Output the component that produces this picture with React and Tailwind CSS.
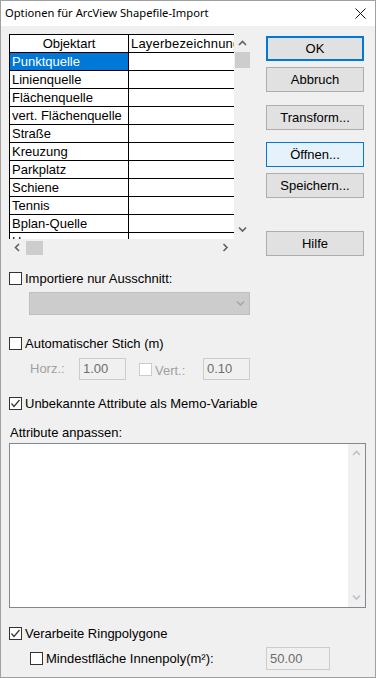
import React from 'react';

const rows = [
    'Punktquelle',
    'Linienquelle',
    'Flächenquelle',
    'vert. Flächenquelle',
    'Straße',
    'Kreuzung',
    'Parkplatz',
    'Schiene',
    'Tennis',
    'Bplan-Quelle',
    'Haus',
];

function Chevron({ dir, color = '#606060' }) {
    const pts = {
        up: '1,5 4.5,1.5 8,5',
        down: '1,1.5 4.5,5 8,1.5',
        left: '5,1 1.5,4.5 5,8',
        right: '1.5,1 5,4.5 1.5,8',
    }[dir];
    const horiz = dir === 'left' || dir === 'right';
    return (
        <svg width={horiz ? 7 : 9} height={horiz ? 9 : 7} viewBox={horiz ? '0 0 7 9' : '0 0 9 7'}>
            <polyline points={pts} fill="none" stroke={color} strokeWidth="1.6" />
        </svg>
    );
}

function CheckBox({ checked, disabled }) {
    return (
        <div className={`w-[13px] h-[13px] shrink-0 border ${disabled ? 'border-[#cccccc]' : 'border-[#333333]'} bg-white flex items-center justify-center`}>
            {checked && (
                <svg width="11" height="11" viewBox="0 0 11 11">
                    <polyline points="1.5,5.5 4,8.5 9.5,2" fill="none" stroke="#333333" strokeWidth="1.2" />
                </svg>
            )}
        </div>
    );
}

function Button({ children, variant, className = '' }) {
    let look = 'border border-[#adadad] bg-[#e1e1e1]';
    if (variant === 'default') look = 'border-2 border-[#0078d7] bg-[#e1e1e1]';
    if (variant === 'hover') look = 'border border-[#0078d7] bg-[#e5f1fb]';
    return (
        <div className={`${look} ${className} h-[25px] w-[98px] flex items-center justify-center text-[13px] text-black`}>
            {children}
        </div>
    );
}

function DisabledInput({ value, className = '' }) {
    return (
        <div className={`${className} h-[22px] border border-[#cccccc] bg-[#f0f0f0] text-[13px] text-[#6d6d6d] pl-[3px] flex items-center`}>
            {value}
        </div>
    );
}

export default function App() {
    return (
        <div className="w-[376px] h-[678px] border border-[#a0a0a0] bg-[#f0f0f0] flex flex-col font-['Liberation_Sans',Arial,sans-serif] text-[13px] text-black overflow-hidden">
            {/* title bar */}
            <div className="h-[25px] bg-white flex items-center justify-between pl-[4px] pr-[9px] shrink-0">
                <span className="font-['Noto_Sans',sans-serif] text-[11.2px] text-black">Optionen für ArcView Shapefile-Import</span>
                <svg width="11" height="11" viewBox="0 0 11 11">
                    <path d="M0.5 0.5 L10.5 10.5 M10.5 0.5 L0.5 10.5" stroke="#111" strokeWidth="1" />
                </svg>
            </div>

            <div className="pl-[8px] pt-[8px] flex flex-col">
                {/* list + buttons */}
                <div className="flex h-[223px]">
                    <div className="w-[242px] h-[222px] flex flex-col">
                        <div className="flex h-[205px]">
                            <div className="w-[225px] h-[205px] bg-white border-l border-t border-black overflow-hidden">
                                <div className="flex h-[18px] border-b border-black">
                                    <div className="w-[119px] shrink-0 border-r border-black flex items-center justify-center">Objektart</div>
                                    <div className="pl-[2px] flex items-center whitespace-nowrap tracking-[0.2px]">Layerbezeichnung</div>
                                </div>
                                {rows.map((r, i) => (
                                    <div key={r} className="flex h-[18px] border-b border-black">
                                        <div className={`w-[119px] shrink-0 border-r border-black flex items-center pl-[2px] whitespace-nowrap ${i === 0 ? 'bg-[#0078d7] text-white' : ''}`}>
                                            {r}
                                        </div>
                                        <div className="flex-1" />
                                    </div>
                                ))}
                            </div>
                            <div className="w-[17px] h-[205px] bg-[#f0f0f0] flex flex-col items-center">
                                <div className="h-[17px] flex items-center justify-center mt-[1px]"><Chevron dir="up" /></div>
                                <div className="w-[15px] h-[16px] bg-[#cdcdcd]" />
                                <div className="flex-1" />
                                <div className="h-[17px] flex items-center justify-center mb-[1px]"><Chevron dir="down" /></div>
                            </div>
                        </div>
                        <div className="flex h-[17px]">
                            <div className="w-[225px] bg-[#f0f0f0] flex items-center">
                                <div className="w-[17px] flex items-center justify-center"><Chevron dir="left" /></div>
                                <div className="w-[17px] h-[14px] bg-[#cdcdcd]" />
                                <div className="flex-1" />
                                <div className="w-[17px] flex items-center justify-center"><Chevron dir="right" /></div>
                            </div>
                            <div className="w-[17px] bg-[#f0f0f0]" />
                        </div>
                    </div>

                    <div className="ml-[15px] mt-[2px] flex flex-col">
                        <Button variant="default">OK</Button>
                        <Button className="mt-[6px]">Abbruch</Button>
                        <Button className="mt-[13px]">Transform...</Button>
                        <Button variant="hover" className="mt-[12px]">Öffnen...</Button>
                        <Button className="mt-[6px]">Speichern...</Button>
                        <Button className="mt-[33px]">Hilfe</Button>
                    </div>
                </div>

                {/* Ausschnitt */}
                <div className="mt-[15px] h-[13px] flex items-center">
                    <CheckBox />
                    <span className="ml-[3px]">Importiere nur Ausschnitt:</span>
                </div>
                <div className="mt-[7px] ml-[20px] w-[221px] h-[23px] bg-[#cccccc] border border-[#bfbfbf] flex items-center justify-end pr-[4px]">
                    <Chevron dir="down" color="#a8a8a8" />
                </div>

                {/* Stich */}
                <div className="mt-[22px] h-[13px] flex items-center">
                    <CheckBox />
                    <span className="ml-[3px]">Automatischer Stich (m)</span>
                </div>
                <div className="mt-[8px] h-[22px] flex items-center">
                    <span className="ml-[21px] w-[49px] text-[#a0a0a0]">Horz.:</span>
                    <DisabledInput value="1.00" className="w-[47px]" />
                    <div className="ml-[13px]"><CheckBox disabled /></div>
                    <span className="ml-[3px] w-[48px] text-[#a0a0a0] mt-[3px]">Vert.:</span>
                    <DisabledInput value="0.10" className="w-[47px]" />
                </div>

                <div className="mt-[17px] h-[13px] flex items-center">
                    <CheckBox checked />
                    <span className="ml-[3px]">Unbekannte Attribute als Memo-Variable</span>
                </div>

                {/* Attribute */}
                <div className="mt-[15px] h-[15px] flex items-center pl-[1px]">Attribute anpassen:</div>
                <div className="mt-[3px] w-[357px] h-[165px] border border-[#828790] bg-white flex justify-end">
                    <div className="w-[17px] h-full bg-[#f0f0f0] flex flex-col items-center">
                        <div className="h-[17px] flex items-center justify-center mt-[1px]"><Chevron dir="up" color="#c0c0c0" /></div>
                        <div className="flex-1" />
                        <div className="h-[17px] flex items-center justify-center mb-[1px]"><Chevron dir="down" color="#c0c0c0" /></div>
                    </div>
                </div>

                <div className="mt-[19px] h-[13px] flex items-center">
                    <CheckBox checked />
                    <span className="ml-[3px]">Verarbeite Ringpolygone</span>
                </div>
                <div className="mt-[7px] h-[23px] flex items-center">
                    <div className="ml-[21px]"><CheckBox /></div>
                    <span className="ml-[3px] w-[220px]">Mindestfläche Innenpoly(m²):</span>
                    <div className="w-[64px] h-[23px] border border-[#cccccc] bg-[#f0f0f0] text-[13px] text-[#6d6d6d] pl-[3px] flex items-center">50.00</div>
                </div>
            </div>
        </div>
    );
}
